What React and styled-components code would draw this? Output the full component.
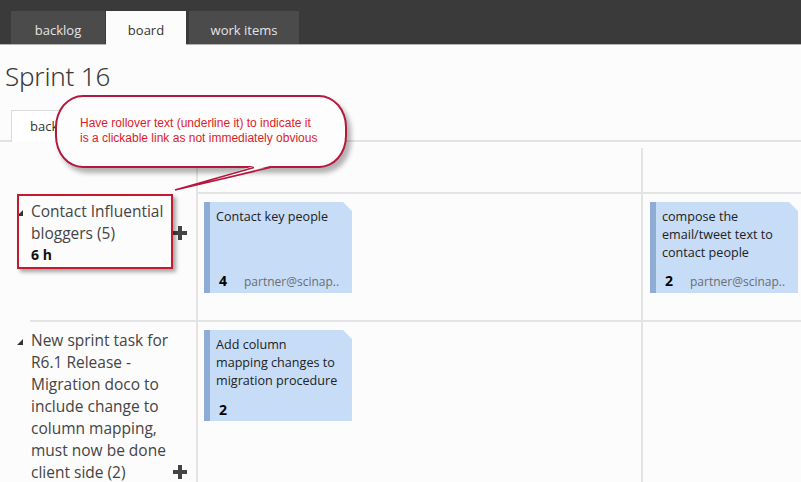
import React from "react";
import styled, { createGlobalStyle } from "styled-components";

const Global = createGlobalStyle`
  html, body { margin: 0; padding: 0; background: #fcfcfc; }
  body { font-family: "Open Sans", "Noto Sans", Arial, sans-serif; color: #333; }
  * { box-sizing: border-box; }
`;

const Page = styled.div`
  position: relative;
  width: 801px;
  height: 482px;
  overflow: hidden;
  background: #fcfcfc;
`;

const TopBar = styled.div`
  height: 45px;
  background: #3a3a3a;
  border-bottom: 1px solid #b4b4b4;
  display: flex;
  align-items: flex-end;
  padding-left: 11px;
`;

const Tab = styled.div`
  width: ${(p) => p.$w}px;
  height: ${(p) => (p.$active ? 34 : 33)}px;
  margin-right: ${(p) => p.$gap || 0}px;
  margin-bottom: ${(p) => (p.$active ? -1 : 0)}px;
  background: ${(p) => (p.$active ? "#fcfcfc" : "#4b4b4b")};
  color: ${(p) => (p.$active ? "#333" : "#e4e4e4")};
  font-size: 13px;
  display: flex;
  align-items: center;
  justify-content: center;
  padding-top: ${(p) => (p.$active ? 3 : 4)}px;
`;

const Title = styled.h1`
  margin: 0;
  height: 65px;
  padding: 14px 0 0 5px;
  font-family: "Noto Sans", "Open Sans", sans-serif;
  font-size: 26px;
  font-weight: 300;
  line-height: 34px;
  color: #3a3a3a;
  letter-spacing: -0.2px;
`;

const SubTabs = styled.div`
  height: 32px;
  border-bottom: 2px solid #e3e3e3;
  padding-left: 11px;
  display: flex;
  align-items: flex-end;
`;

const SubTab = styled.div`
  width: 100px;
  height: 32px;
  margin-bottom: -2px;
  background: #fff;
  border: 1px solid #dcdcdc;
  border-bottom: none;
  padding: 6px 0 0 18px;
  font-size: 13px;
  color: #333;
`;

const Board = styled.div`
  display: grid;
  grid-template-columns: 196px 445px 1fr;
  grid-template-rows: 50px 128px 170px;
`;

const HeadCell = styled.div`
  margin-top: ${(p) => (p.$lined ? 6 : 0)}px;
  border-left: ${(p) => (p.$lined ? "2px solid #e4e4e4" : "none")};
`;

const RowHead = styled.div`
  padding: ${(p) => (p.$ruled ? 9 : 8)}px 0 0 17px;
  background: ${(p) =>
    p.$ruled
      ? "linear-gradient(#e4e4e4, #e4e4e4) 30px 0 / calc(100% - 30px) 2px no-repeat"
      : "none"};
`;

const HeadLine = styled.div`
  display: flex;
  align-items: flex-end;
`;

const Expander = styled.svg`
  width: 6px;
  height: 6px;
  flex: none;
  align-self: flex-start;
  margin: 10px 8px 0 0;
`;

const ItemTitle = styled.div`
  width: 141px;
  font-size: 15.5px;
  line-height: 22px;
  color: #444;
  flex: none;
`;

const Plus = styled.svg`
  width: 14px;
  height: 14px;
  flex: none;
  margin: 0 0 4px 1px;
`;

const Hours = styled.div`
  padding: 1px 0 0 14px;
  font-size: 14px;
  font-weight: 700;
  line-height: 20px;
  color: #111;
`;

const Cell = styled.div`
  border-left: 2px solid #e4e4e4;
  border-top: 2px solid #e4e4e4;
  padding: 8px 0 0 ${(p) => p.$pad}px;
`;

const Card = styled.div`
  width: 148px;
  min-height: 91px;
  background: #c6dcf7;
  border-left: 6px solid #8eadd6;
  clip-path: polygon(0 0, calc(100% - 9px) 0, 100% 9px, 100% 100%, 0 100%);
  padding: 6px 4px 2px 6px;
  display: flex;
  flex-direction: column;
  font-size: 12.6px;
  line-height: 18px;
  color: #222;
`;

const CardFooter = styled.div`
  margin-top: auto;
  padding-top: 8px;
  display: flex;
  align-items: baseline;
  white-space: nowrap;
  overflow: hidden;
`;

const Effort = styled.span`
  width: 28px;
  flex: none;
  padding-left: 3px;
  font-size: 14px;
  font-weight: 700;
  color: #000;
`;

const Owner = styled.span`
  font-size: 12px;
  color: #6d6d6d;
`;

const Callout = styled.div`
  position: absolute;
  left: 55px;
  top: 95px;
  width: 292px;
  height: 73px;
  border: 2px solid #b5173d;
  border-radius: 28px / 32px;
  background: #fdfdfd;
  box-shadow: 4px 5px 5px rgba(0, 0, 0, 0.3);
  padding: 19px 0 0 23px;
  font-family: "Liberation Sans", Arial, sans-serif;
  font-size: 12px;
  line-height: 15px;
  color: #dc1c2a;
`;

const Tail = styled.svg`
  position: absolute;
  left: 170px;
  top: 160px;
  width: 120px;
  height: 35px;
  overflow: visible;
`;

const Highlight = styled.div`
  position: absolute;
  left: 17px;
  top: 194px;
  width: 156px;
  height: 75px;
  border: 2px solid #c41a30;
  box-shadow: 3px 3px 4px rgba(0, 0, 0, 0.35);
  pointer-events: none;
`;

const ExpandIcon = () => (
  <Expander viewBox="0 0 6 6">
    <polygon points="6,0 6,6 0,6" fill="#333" />
  </Expander>
);

const PlusIcon = () => (
  <Plus viewBox="0 0 14 14">
    <path d="M5 0h4v5h5v4H9v5H5V9H0V5h5z" fill="#444" />
  </Plus>
);

const WorkCard = ({ lines, effort, owner }) => (
  <Card>
    <div>
      {lines.map((l, i) => (
        <div key={i}>{l}</div>
      ))}
    </div>
    <CardFooter>
      <Effort>{effort}</Effort>
      {owner && <Owner>{owner}</Owner>}
    </CardFooter>
  </Card>
);

export default function App() {
  return (
    <>
      <Global />
      <Page>
        <TopBar>
          <Tab $w={94} $gap={1}>backlog</Tab>
          <Tab $w={80} $gap={3} $active>board</Tab>
          <Tab $w={110}>work items</Tab>
        </TopBar>
        <Title>Sprint 16</Title>
        <SubTabs>
          <SubTab>backlog</SubTab>
        </SubTabs>
        <Board>
          <HeadCell />
          <HeadCell $lined />
          <HeadCell $lined />

          <RowHead>
            <HeadLine>
              <ExpandIcon />
              <ItemTitle>
                Contact Influential
                <br />
                bloggers (5)
              </ItemTitle>
              <PlusIcon />
            </HeadLine>
            <Hours>6 h</Hours>
          </RowHead>
          <Cell $pad={6}>
            <WorkCard lines={["Contact key people"]} effort="4" owner="partner@scinap.." />
          </Cell>
          <Cell $pad={7}>
            <WorkCard
              lines={["compose the", "email/tweet text to", "contact people"]}
              effort="2"
              owner="partner@scinap.."
            />
          </Cell>

          <RowHead $ruled>
            <HeadLine>
              <ExpandIcon />
              <ItemTitle>
                New sprint task for
                <br />
                R6.1 Release -
                <br />
                Migration doco to
                <br />
                include change to
                <br />
                column mapping,
                <br />
                must now be done
                <br />
                client side (2)
              </ItemTitle>
              <PlusIcon />
            </HeadLine>
          </RowHead>
          <Cell $pad={6}>
            <WorkCard lines={["Add column", "mapping changes to", "migration procedure"]} effort="2" />
          </Cell>
          <Cell $pad={7} />
        </Board>

        <Callout>
          Have rollover text (underline it) to indicate it
          <br />
          is a clickable link as not immediately obvious
        </Callout>
        <Tail viewBox="0 0 120 35">
          <polygon points="5,30 84,6 100,6" fill="#fdfdfd" />
          <polyline points="84,7.5 5,30 100,7.5" fill="none" stroke="#b5173d" strokeWidth="1.6" />
        </Tail>
        <Highlight />
      </Page>
    </>
  );
}
